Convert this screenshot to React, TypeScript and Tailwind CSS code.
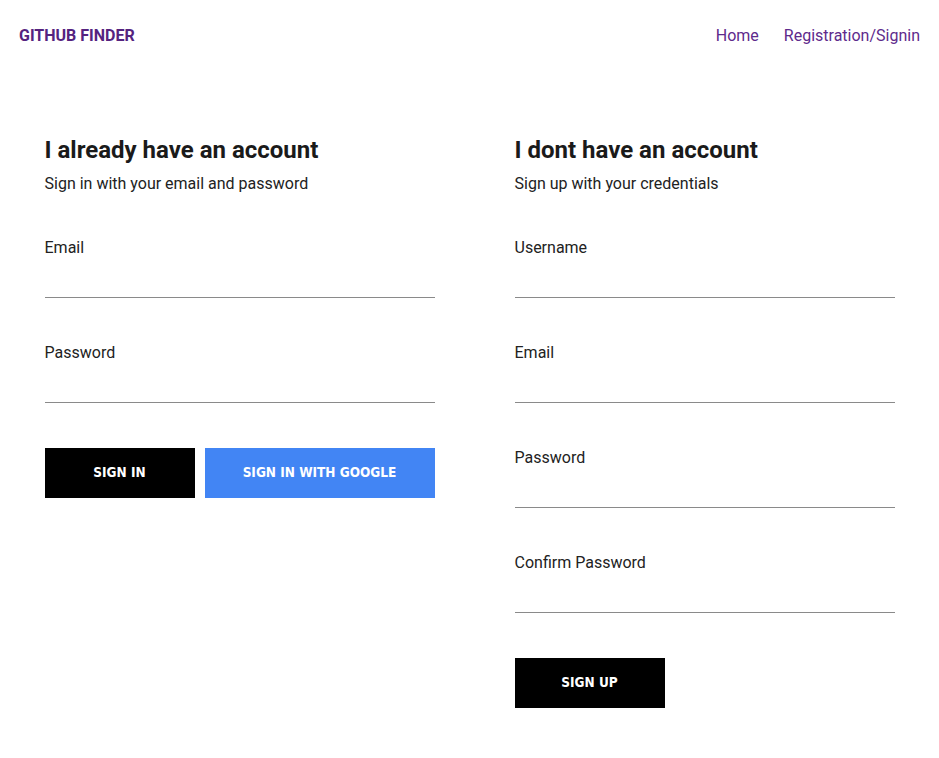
import React from "react";

function Field({ label, type = "text" }: { label: string; type?: string }) {
  return (
    <div className="flex flex-col">
      <label className="text-base leading-6 text-[#222]">{label}</label>
      <input
        type={type}
        className="h-[38px] w-full border-b border-[#8a8a8a] bg-transparent outline-none"
      />
    </div>
  );
}

const btnFont = { fontFamily: '"DejaVu Sans Condensed", "DejaVu Sans", sans-serif' };

export default function App() {
  return (
    <div className="min-h-[758px] bg-white" style={{ fontFamily: "Roboto, sans-serif" }}>
      <header className="flex h-[70px] items-center justify-between pl-[19px] pr-[19px] pt-[2px]">
        <div className="text-base font-bold text-[#55237f]">GITHUB FINDER</div>
        <nav className="flex items-center gap-[25px] text-base text-[#5e2a8c]">
          <a href="#">Home</a>
          <a href="#">Registration/Signin</a>
        </nav>
      </header>
      <main className="mx-auto mt-[64px] flex w-[850px] justify-between">
        <section className="flex w-[390px] flex-col">
          <h2 className="text-2xl font-bold leading-8 text-[#1a1a1a]">I already have an account</h2>
          <p className="mt-[6px] text-base leading-6 text-[#222]">Sign in with your email and password</p>
          <div className="mt-[40px] flex flex-col gap-[43px]">
            <Field label="Email" type="email" />
            <Field label="Password" type="password" />
          </div>
          <div className="mt-[45px] flex gap-[10px]">
            <button
              className="flex h-[50px] w-[150px] items-center justify-center pb-[2px] bg-black text-[13.5px] font-bold uppercase text-white"
              style={btnFont}
            >
              Sign in
            </button>
            <button
              className="flex h-[50px] w-[230px] items-center justify-center pb-[2px] bg-[#4285f4] text-[13.5px] font-bold uppercase text-white"
              style={btnFont}
            >
              Sign in with Google
            </button>
          </div>
        </section>
        <section className="flex w-[380px] flex-col">
          <h2 className="text-2xl font-bold leading-8 text-[#1a1a1a]">I dont have an account</h2>
          <p className="mt-[6px] text-base leading-6 text-[#222]">Sign up with your credentials</p>
          <div className="mt-[40px] flex flex-col gap-[43px]">
            <Field label="Username" />
            <Field label="Email" type="email" />
            <Field label="Password" type="password" />
            <Field label="Confirm Password" type="password" />
          </div>
          <div className="mt-[45px] flex">
            <button
              className="flex h-[50px] w-[150px] items-center justify-center pb-[2px] bg-black text-[13.5px] font-bold uppercase text-white"
              style={btnFont}
            >
              Sign up
            </button>
          </div>
        </section>
      </main>
    </div>
  );
}
